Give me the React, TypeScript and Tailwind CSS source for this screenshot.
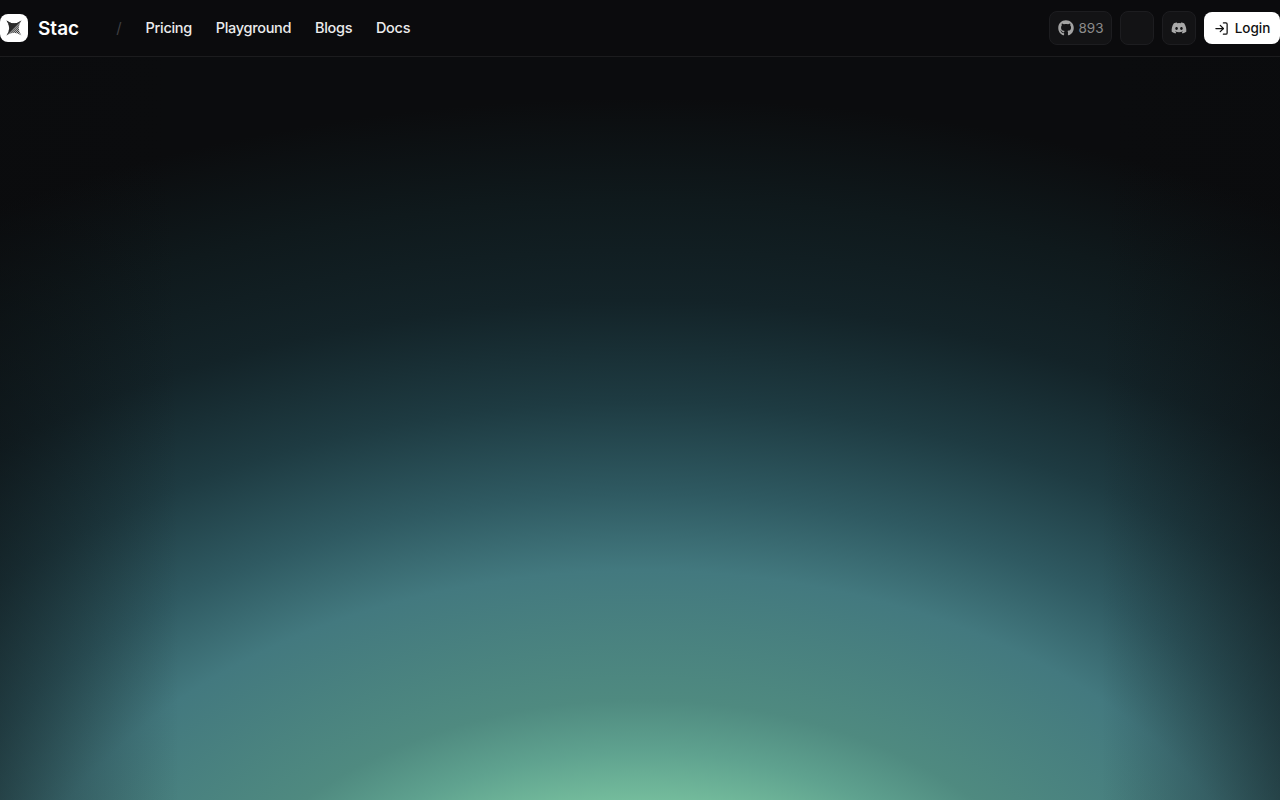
import { LogIn } from "lucide-react";
import { FaDiscord, FaGithub } from "react-icons/fa";

function Logo() {
  return (
    <div className="flex h-7 w-7 items-center justify-center rounded-[8px] bg-white">
      <svg width="18" height="18" viewBox="0 0 18 18">
        <defs>
          <pattern id="hatch" width="1.5" height="1.5" patternUnits="userSpaceOnUse" patternTransform="rotate(45)">
            <rect width="1.5" height="1.5" fill="#d8d8d8" />
            <rect width="0.8" height="1.5" fill="#2e2e2e" />
          </pattern>
        </defs>
        <path d="M1.5 1.5 Q9 7 16.5 1.5 Q11 9 16.5 16.5 Q9 11 1.5 16.5 Q7 9 1.5 1.5Z" fill="url(#hatch)" />
        <path d="M1.5 1.5 Q9 7 16.5 1.5 L9 9 L1.5 16.5 Q7 9 1.5 1.5Z" fill="#2a2a2a" />
      </svg>
    </div>
  );
}

const links = ["Pricing", "Playground", "Blogs", "Docs"];

export default function App() {
  return (
    <div className="flex h-[800px] w-[1280px] flex-col overflow-hidden bg-[linear-gradient(to_right,rgba(10,11,13,0.4),rgba(10,11,13,0)_14%,rgba(10,11,13,0)_86%,rgba(10,11,13,0.4)),radial-gradient(ellipse_1380px_920px_at_50%_1000px,#74bc9c_21.7%,#5fa28f_27%,#4f8a80_32.6%,#43797f_46.7%,#2f5a62_55%,#1e3b42_65%,#132328_76%,#0f191c_87%,#0b0c0e_98%)] font-['Inter','Liberation_Sans',sans-serif]">
      <header className="flex h-[57px] shrink-0 items-center justify-between border-b border-[#1c1c1e] bg-[#0b0b0d]">
        <div className="flex items-center">
          <Logo />
          <span className="ml-2.5 pt-0.5 text-[19px] font-semibold text-white">Stac</span>
          <span className="ml-[37px] text-[15px] text-[#3f3f42]">/</span>
          <nav className="ml-[24px] flex items-center gap-[23.75px]">
            {links.map((l) => (
              <a key={l} className="text-[14.5px] font-medium tracking-[-0.3px] text-[#ececec]">{l}</a>
            ))}
          </nav>
        </div>
        <div className="flex items-center gap-2">
          <div className="flex h-[34px] w-[63px] items-center justify-center gap-1 rounded-[8px] border border-[#1d1d20] bg-[#131315] pl-px text-[13.5px] text-[#8c8c8c]">
            <FaGithub size={16} className="text-[#a3a3a3]" />
            893
          </div>
          <div className="h-[34px] w-[34px] rounded-[8px] border border-[#1d1d20] bg-[#131315]" />
          <div className="flex h-[34px] w-[34px] items-center justify-center rounded-[8px] border border-[#1d1d20] bg-[#131315]">
            <FaDiscord size={16} className="text-[#a8a8a8]" />
          </div>
          <button className="flex h-8 w-[76px] items-center justify-center gap-1.5 rounded-[8px] bg-white text-[13.5px] font-medium text-[#111]">
            <LogIn size={15} />
            Login
          </button>
        </div>
      </header>
      <main className="flex-1" />
    </div>
  );
}
